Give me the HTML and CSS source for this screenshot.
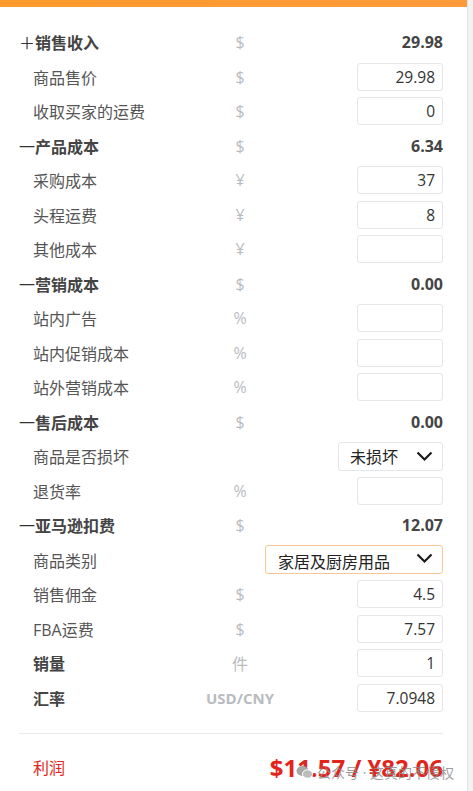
FILE: index.html
```html
<!DOCTYPE html>
<html lang="zh-CN">
<head>
    <meta charset="UTF-8">
    <meta name="viewport" content="width=device-width, initial-scale=1.0">
    <title>利润计算</title>
    <link rel="stylesheet" href="styles.css">
</head>
<body>
    <div class="page">
        <div class="panel">
            <div class="top-bar"></div>
            <div class="calc">
                <div class="row head">
                    <span class="label"><span class="sign">＋</span>销售收入</span>
                    <span class="unit">$</span>
                    <span class="value">29.98</span>
                </div>
                <div class="row">
                    <span class="label">商品售价</span>
                    <span class="unit">$</span>
                    <span class="value"><input class="field" value="29.98"></span>
                </div>
                <div class="row">
                    <span class="label">收取买家的运费</span>
                    <span class="unit">$</span>
                    <span class="value"><input class="field" value="0"></span>
                </div>

                <div class="row head">
                    <span class="label"><span class="sign">一</span>产品成本</span>
                    <span class="unit">$</span>
                    <span class="value">6.34</span>
                </div>
                <div class="row">
                    <span class="label">采购成本</span>
                    <span class="unit">¥</span>
                    <span class="value"><input class="field" value="37"></span>
                </div>
                <div class="row">
                    <span class="label">头程运费</span>
                    <span class="unit">¥</span>
                    <span class="value"><input class="field" value="8"></span>
                </div>
                <div class="row">
                    <span class="label">其他成本</span>
                    <span class="unit">¥</span>
                    <span class="value"><input class="field" value=""></span>
                </div>

                <div class="row head">
                    <span class="label"><span class="sign">一</span>营销成本</span>
                    <span class="unit">$</span>
                    <span class="value">0.00</span>
                </div>
                <div class="row">
                    <span class="label">站内广告</span>
                    <span class="unit">%</span>
                    <span class="value"><input class="field" value=""></span>
                </div>
                <div class="row">
                    <span class="label">站内促销成本</span>
                    <span class="unit">%</span>
                    <span class="value"><input class="field" value=""></span>
                </div>
                <div class="row">
                    <span class="label">站外营销成本</span>
                    <span class="unit">%</span>
                    <span class="value"><input class="field" value=""></span>
                </div>

                <div class="row head">
                    <span class="label"><span class="sign">一</span>售后成本</span>
                    <span class="unit">$</span>
                    <span class="value">0.00</span>
                </div>
                <div class="row">
                    <span class="label">商品是否损坏</span>
                    <span class="unit"></span>
                    <span class="value">
                        <span class="select small">未损坏
                            <svg class="chevron" width="17" height="11" viewBox="0 0 17 11"><polyline points="1.5,1.5 8.5,8.5 15.5,1.5" fill="none" stroke="#1a1a1a" stroke-width="2.2"/></svg>
                        </span>
                    </span>
                </div>
                <div class="row">
                    <span class="label">退货率</span>
                    <span class="unit">%</span>
                    <span class="value"><input class="field" value=""></span>
                </div>

                <div class="row head">
                    <span class="label"><span class="sign">一</span>亚马逊扣费</span>
                    <span class="unit">$</span>
                    <span class="value">12.07</span>
                </div>
                <div class="row">
                    <span class="label">商品类别</span>
                    <span class="value wide">
                        <span class="select large focus">家居及厨房用品
                            <svg class="chevron" width="17" height="11" viewBox="0 0 17 11"><polyline points="1.5,1.5 8.5,8.5 15.5,1.5" fill="none" stroke="#1a1a1a" stroke-width="2.2"/></svg>
                        </span>
                    </span>
                </div>
                <div class="row">
                    <span class="label">销售佣金</span>
                    <span class="unit">$</span>
                    <span class="value"><input class="field" value="4.5"></span>
                </div>
                <div class="row">
                    <span class="label">FBA运费</span>
                    <span class="unit">$</span>
                    <span class="value"><input class="field" value="7.57"></span>
                </div>

                <div class="row">
                    <span class="label strong">销量</span>
                    <span class="unit">件</span>
                    <span class="value"><input class="field" value="1"></span>
                </div>
                <div class="row">
                    <span class="label strong">汇率</span>
                    <span class="unit code">USD/CNY</span>
                    <span class="value"><input class="field" value="7.0948"></span>
                </div>
            </div>

            <div class="profit">
                <span class="profit-label">利润</span>
                <span class="profit-value">$11.57 / ¥82.06</span>
                <div class="watermark">
                    <svg width="17" height="14" viewBox="0 0 17 14">
                        <ellipse cx="6.5" cy="6" rx="6" ry="5" fill="#a8a8a8"/>
                        <ellipse cx="11.5" cy="9" rx="5" ry="4.2" fill="#bcbcbc" stroke="#fff" stroke-width="1"/>
                    </svg>
                    <span>公众号 · 这真的不侵权</span>
                </div>
            </div>
        </div>
        <div class="edge"></div>
    </div>
</body>
</html>
```

FILE: styles.css
```css
body {
    margin: 0;
    background-color: #fff;
    font-family: 'Open Sans', 'Noto Sans CJK SC', sans-serif;
}
.page {
    display: flex;
    height: 791px;
    overflow: hidden;
}
.panel {
    width: 467px;
    position: relative;
}
.edge {
    flex: 1;
    background-color: #f2f2f2;
    border-left: 1px solid #e4e4e4;
}
.top-bar {
    height: 7px;
    background: linear-gradient(90deg, #ff9a2c, #ff9a3c);
}
.calc {
    padding: 18px 24px 0 19px;
}
.row {
    display: grid;
    grid-template-columns: 181px 80px 1fr;
    align-items: center;
    height: 34.5px;
}
.label {
    font-size: 16px;
    color: #555;
    padding-left: 14px;
}
.head .label {
    font-weight: bold;
    color: #444;
    padding-left: 0;
}
.sign {
    font-weight: normal;
    color: #333;
}
.label.strong {
    font-weight: bold;
    color: #444;
}
.unit {
    text-align: center;
    font-size: 16px;
    color: #b8bbbf;
}
.unit.code {
    font-size: 15px;
    font-weight: bold;
}
.value {
    text-align: right;
    font-size: 16px;
    font-weight: bold;
    color: #444;
}
.value.wide {
    grid-column: 2 / 4;
}
.field {
    box-sizing: border-box;
    width: 86px;
    height: 28px;
    border: 1px solid #e4e6e8;
    border-radius: 3px;
    padding: 0 7px;
    font-family: 'Open Sans', 'Noto Sans CJK SC', sans-serif;
    font-size: 15.5px;
    color: #333;
    text-align: right;
    vertical-align: middle;
    outline: none;
}
.select {
    box-sizing: border-box;
    display: inline-flex;
    align-items: center;
    justify-content: space-between;
    height: 29px;
    border: 1px solid #e4e6e8;
    border-radius: 3px;
    padding: 0 9px 0 11px;
    font-size: 16px;
    font-weight: normal;
    color: #222;
    vertical-align: middle;
}
.select.small {
    width: 105px;
}
.select.large {
    width: 178px;
    padding-left: 12px;
    padding-top: 3px;
}
.select.focus {
    border-color: #f7c894;
}
.select.large .chevron {
    margin-top: -5px;
}
.profit {
    margin: 18px 24px 0 19px;
    border-top: 1px solid #e8ecef;
    height: 66px;
    display: flex;
    align-items: center;
    justify-content: space-between;
    position: relative;
}
.profit-label {
    font-size: 16px;
    color: #e1251b;
    padding-left: 14px;
}
.profit-value {
    font-size: 24px;
    font-weight: bold;
    color: #e1251b;
}
.watermark {
    position: absolute;
    left: 277px;
    top: 28px;
    display: flex;
    align-items: center;
    gap: 4px;
    font-size: 14px;
    color: rgba(140, 140, 140, 0.85);
    white-space: nowrap;
}
```
